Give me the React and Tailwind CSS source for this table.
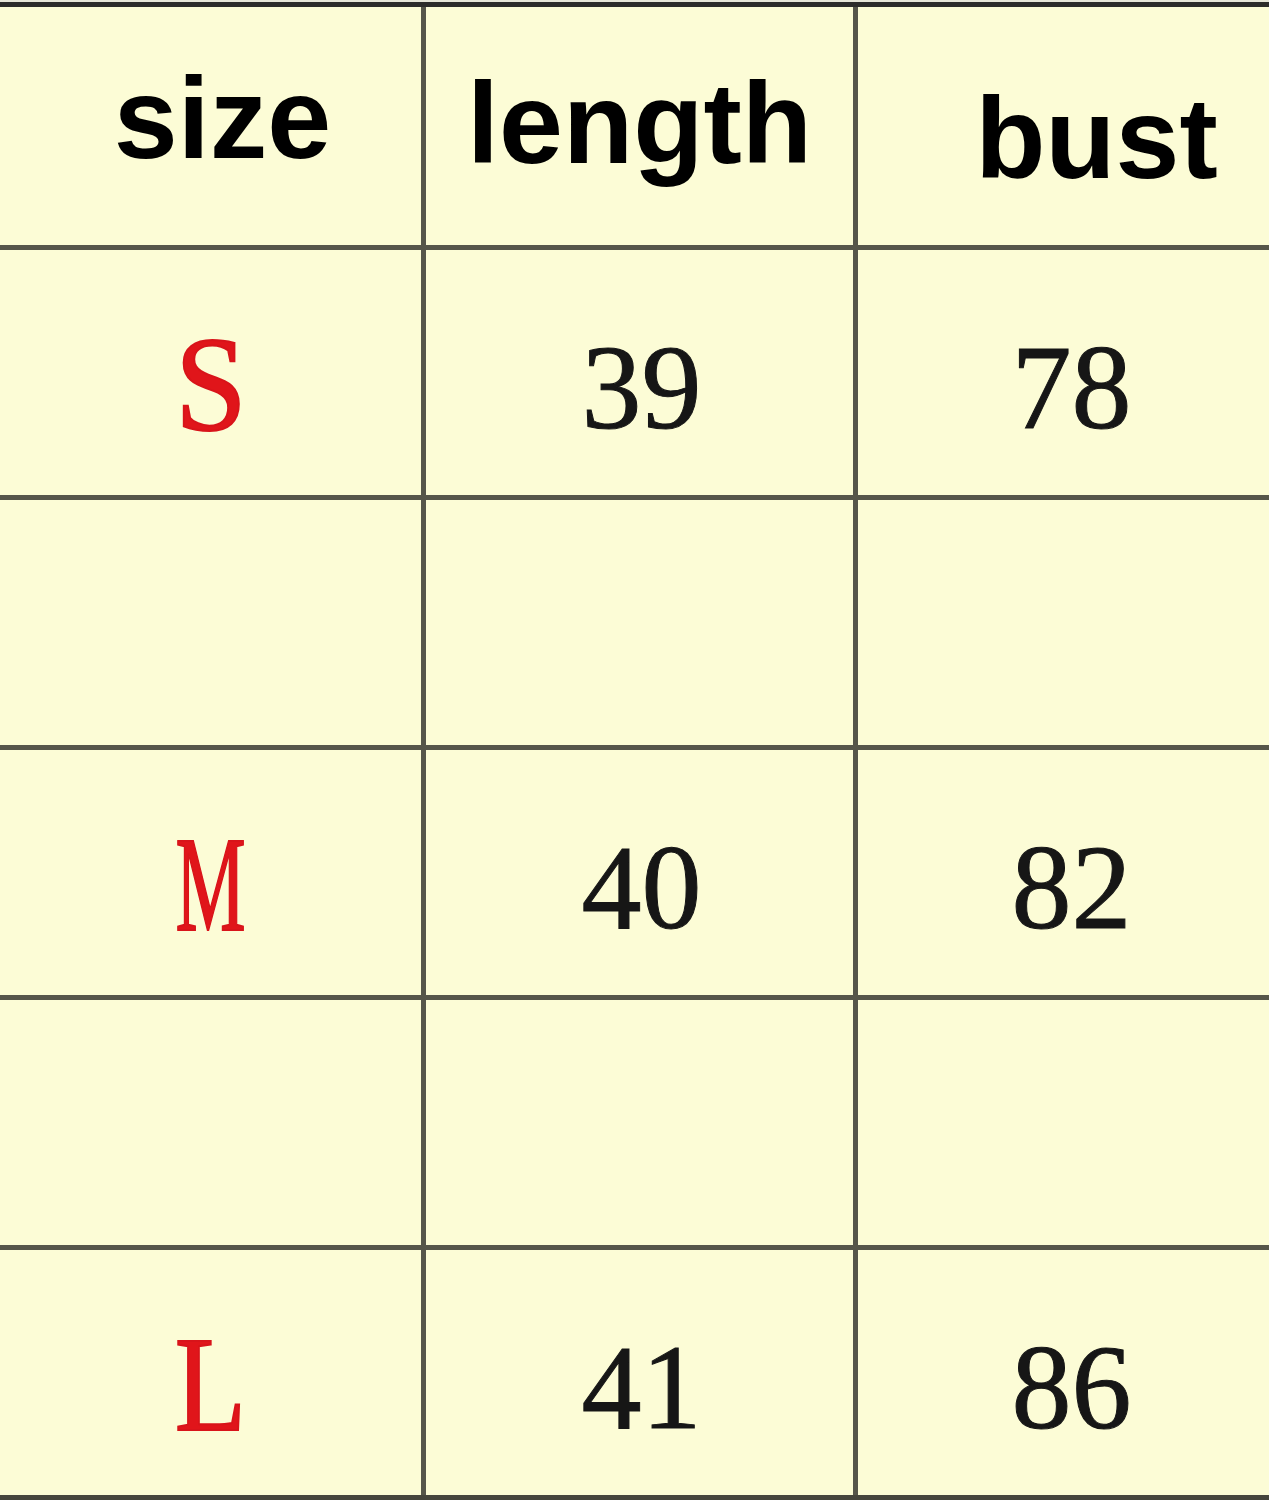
const rows = [
  { size: 'S', sizeClass: 'scale-x-[0.95]', length: '39', bust: '78' },
  { blank: true },
  { size: 'M', sizeClass: 'scale-x-[0.58]', length: '40', bust: '82' },
  { blank: true },
  { size: 'L', sizeClass: 'scale-x-[0.86]', length: '41', bust: '86' },
];

const Line = () => <div className="h-[5px] w-full bg-[#56564a]" />;

const Row = ({ row }) => (
  <div className="flex h-[245px]">
    <div className="flex w-[421px] items-center justify-center pt-[23px]">
      {!row.blank && (
        <span
          className={`inline-block text-[136px] leading-none text-[#e0151a] [-webkit-text-stroke:2px_#d8141a] ${row.sizeClass}`}
          style={{ fontFamily: '"Liberation Serif", serif' }}
        >
          {row.size}
        </span>
      )}
    </div>
    <div className="w-[5px] bg-[#56564a]" />
    <div className="flex w-[427px] items-center justify-center pt-[30px] pl-[4px]">
      {!row.blank && (
        <span
          className="text-[120px] leading-none text-[#161616] [-webkit-text-stroke:1px_#161616]"
          style={{ fontFamily: '"Liberation Serif", serif' }}
        >
          {row.length}
        </span>
      )}
    </div>
    <div className="w-[5px] bg-[#56564a]" />
    <div className="flex flex-1 items-center justify-center pt-[30px] pl-[16px]">
      {!row.blank && (
        <span
          className="text-[120px] leading-none text-[#161616] [-webkit-text-stroke:1px_#161616]"
          style={{ fontFamily: '"Liberation Serif", serif' }}
        >
          {row.bust}
        </span>
      )}
    </div>
  </div>
);

export default function App() {
  return (
    <div className="w-[1269px] h-[1500px] overflow-hidden bg-[#fcfcd6]">
      <div className="h-[2px] bg-[#e6e6d8]" />
      <div className="h-[5px] bg-[#2c2c2a]" />

      {/* header */}
      <div className="flex h-[238px]" style={{ fontFamily: '"Liberation Sans", Arial, sans-serif' }}>
        <div className="flex w-[421px] items-center justify-center pb-[16px] pl-[24px]">
          <span className="text-[115px] font-bold leading-none text-black">size</span>
        </div>
        <div className="w-[5px] bg-[#56564a]" />
        <div className="flex w-[427px] items-center justify-center pb-[6px]">
          <span className="text-[115px] font-bold leading-none text-black">length</span>
        </div>
        <div className="w-[5px] bg-[#56564a]" />
        <div className="flex flex-1 items-center justify-center pt-[24px] pl-[66px]">
          <span className="text-[115px] font-bold leading-none text-black">bust</span>
        </div>
      </div>

      {rows.map((row, i) => (
        <div key={i}>
          <Line />
          <Row row={row} />
        </div>
      ))}
      <div className="h-[5px] bg-[#45453c]" />
    </div>
  );
}
